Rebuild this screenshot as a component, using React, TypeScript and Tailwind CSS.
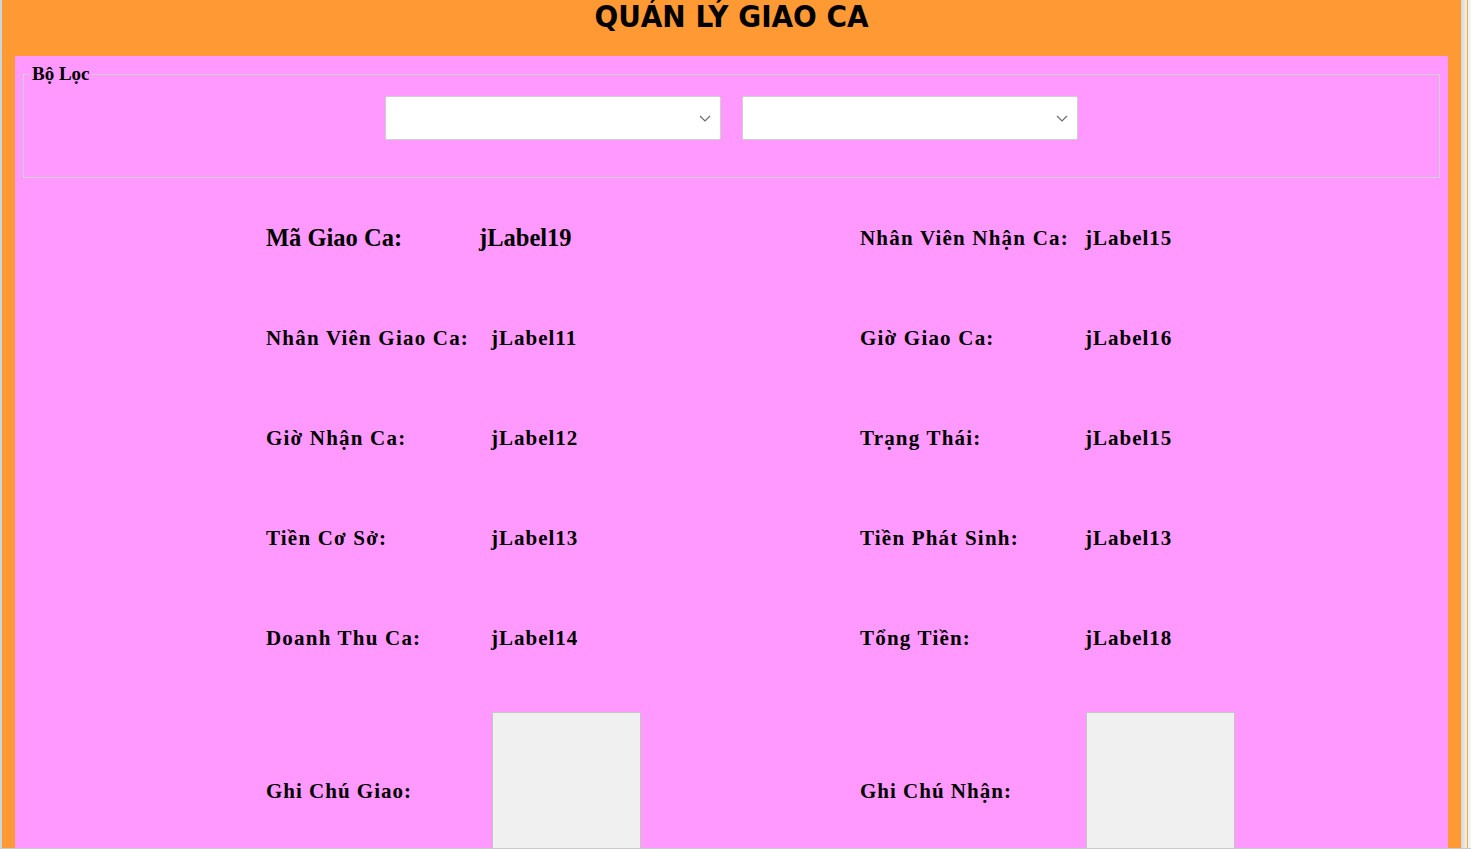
import React from "react";

const serif = { fontFamily: '"Liberation Serif", "Times New Roman", serif' };

function Chevron() {
  return (
    <svg width="12" height="7" viewBox="0 0 12 7" className="shrink-0">
      <path d="M1 1 L6 6 L11 1" fill="none" stroke="#6b6b6b" strokeWidth="1.2" />
    </svg>
  );
}

function Combo() {
  return (
    <div className="w-[336px] h-[44px] bg-white border border-[#cfcfcf] rounded-[2px] flex items-center justify-end pr-[9px]">
      <Chevron />
    </div>
  );
}

function Field({ label, value, big = false }: { label: string; value: string; big?: boolean }) {
  if (big) {
    return (
      <div className="flex items-center h-[100px]">
        <div className="w-[213px] text-[24.5px] leading-[24px] font-bold text-black" style={serif}>
          {label}
        </div>
        <div className="text-[24.5px] leading-[24px] font-bold text-black" style={serif}>
          {value}
        </div>
      </div>
    );
  }
  return (
    <div className="flex items-center h-[100px]">
      <div className="w-[225px] text-[21px] leading-[21px] font-bold tracking-[1.2px] text-black" style={serif}>
        {label}
      </div>
      <div className="text-[21px] leading-[21px] font-bold tracking-[1px] text-black" style={serif}>
        {value}
      </div>
    </div>
  );
}

function NoteField({ label }: { label: string }) {
  return (
    <div className="flex items-center h-[158px]">
      <div className="w-[226px] text-[21px] leading-[21px] font-bold tracking-[1px] text-black" style={serif}>
        {label}
      </div>
      <div className="w-[149px] h-[158px] bg-[#f0f0f0] border border-[#c4c4c4]" />
    </div>
  );
}

export default function App() {
  return (
    <div className="w-[1471px] h-[849px] overflow-hidden flex flex-col bg-white">
      <div className="flex flex-1 min-h-0">
        <div className="w-[2px] bg-[#c9d6da]" />
        <div className="flex-1 bg-[#ff9933] flex flex-col overflow-hidden">
          <div className="h-[56px] shrink-0 flex justify-center">
            <div
              className="mt-[1px] text-[31px] leading-[31px] font-bold text-black"
              style={{ fontFamily: '"DejaVu Sans Condensed", "DejaVu Sans", Tahoma, sans-serif' }}
            >
              QUẢN LÝ GIAO CA
            </div>
          </div>
          <div className="flex-1 mx-[13px] bg-[#ff99ff] overflow-hidden">
            <fieldset className="mx-[8px] mt-[8px] h-[114px] border border-[#d0d0d0] px-0">
              <legend className="ml-[6px] px-[2px] text-[19px] leading-[20px] font-bold text-black" style={serif}>
                Bộ Lọc
              </legend>
              <div className="flex justify-center gap-[21px] pt-[12px]">
                <Combo />
                <Combo />
              </div>
            </fieldset>
            <div className="pl-[251px] mt-[10px] grid grid-cols-[594px_1fr]">
              <Field label="Mã Giao Ca:" value="jLabel19" big />
              <Field label="Nhân Viên Nhận Ca:" value="jLabel15" />
              <Field label="Nhân Viên Giao Ca:" value="jLabel11" />
              <Field label="Giờ Giao Ca:" value="jLabel16" />
              <Field label="Giờ Nhận Ca:" value="jLabel12" />
              <Field label="Trạng Thái:" value="jLabel15" />
              <Field label="Tiền Cơ Sở:" value="jLabel13" />
              <Field label="Tiền Phát Sinh:" value="jLabel13" />
              <Field label="Doanh Thu Ca:" value="jLabel14" />
              <Field label="Tổng Tiền:" value="jLabel18" />
            </div>
            <div className="pl-[251px] mt-[24px] grid grid-cols-[594px_1fr]">
              <NoteField label="Ghi Chú Giao:" />
              <NoteField label="Ghi Chú Nhận:" />
            </div>
          </div>
        </div>
        <div className="w-[6px] bg-gradient-to-r from-[#d4d4d4] to-[#f2f2f2]" />
        <div className="w-[1px] bg-[#ffa726]" />
        <div className="w-[3px] bg-[#f4f4f4]" />
      </div>
      <div className="h-[1px] bg-[#c6cccc]" />
    </div>
  );
}
